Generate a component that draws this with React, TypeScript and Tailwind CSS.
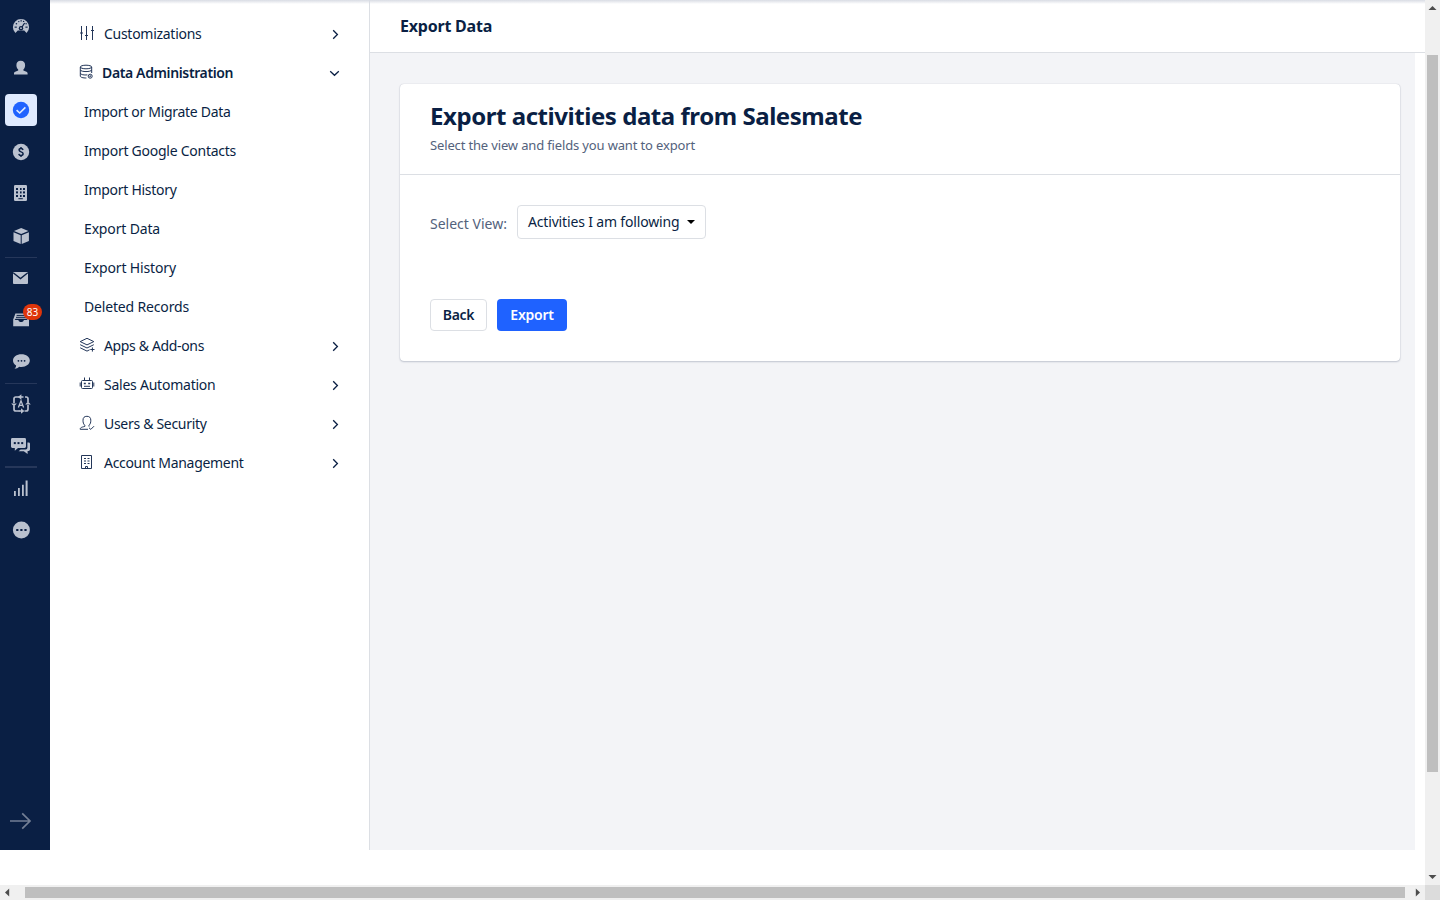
import type { ReactNode } from "react";

const CUT = "#0a1f44";

function RailIcon({ children, className = "" }: { children: ReactNode; className?: string }) {
  return (
    <svg viewBox="0 0 20 20" className={"size-5 " + className} fill="currentColor" stroke="none">
      {children}
    </svg>
  );
}

const Gauge = () => (
  <RailIcon>
    <path d="M4.4 17 A8.1 8.1 0 1 1 15.6 17 L13.2 14.4 H6.8 Z" />
    <g fill={CUT}>
      <rect x="3.6" y="10.6" width="2.2" height="1.1" /><rect x="14.4" y="10.6" width="2.2" height="1.1" />
      <circle cx="5.4" cy="7.7" r="0.8" /><circle cx="7.8" cy="5.6" r="0.7" />
      <rect x="9.6" y="3.8" width="1" height="1.8" /><circle cx="12.6" cy="5.4" r="0.7" /><circle cx="15.1" cy="7.8" r="0.7" />
    </g>
    <path d="M13.6 7 L10.4 12" stroke={CUT} strokeWidth="1.2" />
    <circle cx="10" cy="12.2" r="2.2" fill={CUT} />
    <circle cx="10" cy="12.2" r="0.9" />
    <path d="M6.6 17.2 L7.8 15.2 H12.2 L13.4 17.2 Z" fill={CUT} />
  </RailIcon>
);

const Person = () => (
  <RailIcon>
    <path d="M9.7 2.8 C12.6 2.8 14.1 4.6 14.1 7.2 C14.1 9 13.4 10.5 12.4 11.5 V12.6 L15.4 13.7 C16.2 14 16.6 14.5 16.6 15.4 V16.4 H3 V15.4 C3 14.5 3.4 14 4.2 13.7 L7.2 12.6 V11.5 C6.1 10.5 5.4 9 5.4 7.2 C5.4 4.6 6.9 2.8 9.7 2.8 Z" />
  </RailIcon>
);

const Check = () => (
  <RailIcon className="text-[#1f62ff]">
    <circle cx="10" cy="10" r="8.2" />
    <path d="M5.6 10.2 L8.7 13 L14.4 7.4" fill="none" stroke="#dfeaff" strokeWidth="1.6" />
  </RailIcon>
);

const Dollar = () => (
  <RailIcon>
    <circle cx="10" cy="10" r="8.2" />
    <path d="M12 8 C11.8 6.9 11.1 6.5 10 6.5 C8.8 6.5 8.1 7.1 8.1 8.1 C8.1 10.4 12.1 9.4 12.1 11.8 C12.1 12.9 11.2 13.5 10 13.5 C8.7 13.5 8 12.9 7.8 11.8 M10 4.9 V6.4 M10 13.6 V15.1" fill="none" stroke={CUT} strokeWidth="1.5" />
  </RailIcon>
);

const Building = () => (
  <RailIcon className="-mt-[2px]">
    <rect x="3" y="2" width="13" height="16" rx="1.2" />
    <g fill={CUT}>
      <rect x="5" y="5" width="2" height="2" /><rect x="9" y="5" width="1.6" height="2" /><rect x="12" y="5" width="2" height="2" />
      <rect x="5" y="8.4" width="2" height="2" /><rect x="9" y="8.4" width="1.6" height="2" /><rect x="12" y="8.4" width="2" height="2" />
      <rect x="5" y="12" width="2" height="2" /><rect x="9" y="12" width="1.6" height="2" /><rect x="12" y="12" width="2" height="2" />
      <rect x="7.4" y="15.2" width="4.4" height="1" />
    </g>
  </RailIcon>
);

const Box = () => (
  <RailIcon>
    <path d="M10.2 2.1 L17.4 4.9 L10.2 7.9 L3 4.9 Z M2.5 6.2 L9.7 9.2 V17.9 L2.5 14.9 Z M17.9 6.2 L10.7 9.2 V17.9 L17.9 14.9 Z" />
  </RailIcon>
);

const Mail = () => (
  <RailIcon>
    <rect x="2" y="4" width="15" height="12" rx="0.9" />
    <path d="M2.2 4.8 L9.5 10.6 L16.8 4.8" fill="none" stroke={CUT} strokeWidth="1.3" />
  </RailIcon>
);

const Inbox = () => (
  <RailIcon className="-mt-[2px]">
    <path d="M4.4 4.6 H15.7 L18 10.6 V17.3 H2.2 V10.6 Z" />
    <path d="M5.6 6.4 H14.6 M5 8.3 H15.2" stroke={CUT} strokeWidth="1" />
    <path d="M3.6 10.9 H7.4 C7.6 13.6 12.6 13.6 12.8 10.9 H16.6 L15.6 9.7 H4.6 Z" fill={CUT} />
  </RailIcon>
);

const Chat = () => (
  <RailIcon className="-mt-[2px]">
    <path d="M10.4 3.2 C15.2 3.2 18.8 5.9 18.8 9.6 C18.8 13.3 15.2 16 10.4 16 C9.6 16 9 15.9 8.3 15.8 C7 17 5.4 17.7 3.5 17.8 C4.6 16.9 5.1 15.8 5.1 14.5 C3.1 13.4 2 11.7 2 9.6 C2 5.9 5.6 3.2 10.4 3.2 Z" />
    <g fill={CUT}><circle cx="7.4" cy="9.8" r="0.9" /><circle cx="10.5" cy="9.8" r="0.9" /><circle cx="13.6" cy="9.8" r="0.9" /></g>
  </RailIcon>
);

const Automation = () => (
  <RailIcon>
    <path
      d="M14 3 H15.2 Q17 3 17 4.8 V8 M17 11 V15 Q17 17 15.2 17 H13.5 M8.5 17 H5 Q3 17 3 15.2 V12 M3 9 V4.8 Q3 3 4.8 3 H8"
      fill="none" stroke="currentColor" strokeWidth="1.7"
    />
    <path d="M6.8 3 L10.4 0.2 V2.2 H12.5 V3.8 H10.4 V5.8 Z M0.2 9.4 H5.8 L3 12.6 Z M13.4 17 L10 19.8 V17.8 H7.8 V16.2 H10 V14.2 Z M14.2 10.6 H19.8 L17 7.4 Z" />
    <path d="M7.4 13.4 L10 6.8 L12.6 13.4 M8.4 11.4 H11.6" fill="none" stroke="currentColor" strokeWidth="1.3" />
  </RailIcon>
);

const Conversations = () => (
  <RailIcon>
    <path d="M1.4 2 H13.6 Q15 2 15 3.4 V10.6 Q15 12 13.6 12 H7 L3.8 14.8 V12 H1.4 Q0 12 0 10.6 V3.4 Q0 2 1.4 2 Z" />
    <path d="M16.4 6.4 H17.6 Q19 6.4 19 7.8 V13.6 Q19 15 17.6 15 H16.6 V18 L12.8 15.2 H7.6 L9.6 13.4 H14.8 Q16.4 13.4 16.4 11.8 Z" />
    <g fill={CUT}><rect x="2.8" y="6.1" width="2" height="2" /><rect x="6.5" y="6.1" width="2" height="2" /><rect x="10.2" y="6.1" width="2" height="2" /></g>
  </RailIcon>
);

const Bars = () => (
  <RailIcon>
    <path d="M3 13 H4.8 V18 H3 Z M7 10 H8.8 V18 H7 Z M11 6.8 H12.8 V18 H11 Z M14.6 2.4 H16.6 V18 H14.6 Z" />
  </RailIcon>
);

const More = () => (
  <RailIcon>
    <circle cx="10.4" cy="10" r="8.5" />
    <g fill={CUT}><rect x="5.2" y="9" width="2.2" height="2" /><rect x="9.3" y="9" width="2.2" height="2" /><rect x="13.4" y="9" width="2.2" height="2" /></g>
  </RailIcon>
);

const railGroups: { line: string; items: { id: string; icon: ReactNode; active?: boolean; badge?: string }[] }[] = [
  {
    line: "",
    items: [
      { id: "dashboard", icon: <Gauge /> },
      { id: "contacts", icon: <Person /> },
      { id: "activities", icon: <Check />, active: true },
      { id: "deals", icon: <Dollar /> },
      { id: "companies", icon: <Building /> },
      { id: "products", icon: <Box /> },
    ],
  },
  {
    line: "shadow-[inset_0_1px_0_#26375a]",
    items: [
      { id: "email", icon: <Mail /> },
      { id: "inbox", icon: <Inbox />, badge: "83" },
      { id: "chat", icon: <Chat /> },
    ],
  },
  {
    line: "shadow-[inset_0_1px_0_#26375a]",
    items: [
      { id: "automation", icon: <Automation /> },
      { id: "conversations", icon: <Conversations /> },
    ],
  },
  {
    line: "shadow-[inset_0_1px_0_#26375a,0_-1px_0_#26375a]",
    items: [
      { id: "reports", icon: <Bars /> },
      { id: "more", icon: <More /> },
    ],
  },
];

function Rail() {
  return (
    <nav className="flex h-[850px] w-[50px] shrink-0 flex-col bg-[#0a1f44] pt-[5px] pl-[5px] text-[#bac1cf]">
      {railGroups.map((group, g) => (
        <div key={g} className={"w-8 " + group.line}>
          {group.items.map((item) => (
            <div key={item.id} className="flex h-[42px] items-center">
              <div className={"relative flex size-8 items-center justify-center rounded-[4px] " + (item.active ? "bg-[#dfeaff]" : "")}>
                {item.icon}
                {item.badge && (
                  <span className="absolute top-0 left-[18px] flex h-4 w-[19px] items-center justify-center rounded-full bg-[#de350b] text-[10px] leading-4 text-white">
                    {item.badge}
                  </span>
                )}
              </div>
            </div>
          ))}
        </div>
      ))}
      <svg viewBox="0 0 22 18" className="mt-auto mb-5 ml-[5px] h-[18px] w-[22px]" fill="none" stroke="#737f95" strokeWidth="1.7">
        <path d="M0 9 H20 M12.2 1.4 L20 9 L12.2 16.6" />
      </svg>
    </nav>
  );
}

function MenuIcon({ children }: { children: ReactNode }) {
  return (
    <svg viewBox="0 0 16 16" className="-mt-0.5 size-4 shrink-0" fill="none" stroke="#233659" strokeWidth="1">
      {children}
    </svg>
  );
}

const Sliders = () => (
  <MenuIcon>
    <path d="M2.5 1 V15 M7.5 1 V15 M13.5 1 V15 M1 8 H4 M6 10.5 H9 M12 5.5 H15" />
  </MenuIcon>
);
const Database = () => (
  <MenuIcon>
    <ellipse cx="7" cy="3" rx="5.7" ry="1.8" />
    <path d="M1.3 3 V12 C1.3 13.4 4 14 7.4 14 M12.7 3 V9 M1.3 6 C2 8.1 12 8.1 12.7 6 M1.3 9.2 C1.9 10.8 5 11.2 8.4 10.9" />
    <circle cx="11.2" cy="12.2" r="2" />
    <circle cx="11.2" cy="12.2" r="0.5" />
  </MenuIcon>
);
const Layers = () => (
  <MenuIcon>
    <path d="M8 1.3 L14.8 4.6 L8 7.9 L1.2 4.6 Z M1.2 7.7 L8 11 L14.8 7.7 M1.2 10.8 L8 14.1 L10.6 12.8 M13.4 10.4 V14.6 M11.3 12.5 H15.5" />
  </MenuIcon>
);
const Robot = () => (
  <MenuIcon>
    <rect x="2.5" y="4.5" width="11" height="8" rx="1" />
    <path d="M5.5 4.5 V1.5 M10.5 4.5 V1.5 M1.2 6.5 V10.5 M14.8 6.5 V10.5 M5 10.3 H11" />
    <path d="M4.8 7.5 H6.8 M9.2 7.5 H11.2" strokeWidth="1.3" />
  </MenuIcon>
);
const User = () => (
  <MenuIcon>
    <path d="M9 14.3 H1.2 C1.2 12.8 2 12.3 5.8 11.4 V10.2 C4.4 9 4 7.6 4 5.2 C4 2.6 5.4 1.3 7.9 1.3 C10.4 1.3 11.8 2.6 11.8 5.2 C11.8 7.6 11.4 9 10 10.2 V11.6 M10 12.8 L11.8 14.4 L15 11.2" />
  </MenuIcon>
);
const Office = () => (
  <MenuIcon>
    <path d="M2.5 1.5 H12.5 V14.5 H2.5 Z M6.5 14.5 V12.5 H8.5 V14.5" />
    <path d="M5 4.5 H7 M8.5 4.5 H10.5 M5 7 H7 M8.5 7 H10.5 M5 9.5 H7 M8.5 9.5 H10.5" />
  </MenuIcon>
);

const Chevron = ({ open }: { open?: boolean }) => (
  <svg viewBox="0 0 12 12" className="ml-auto size-3 shrink-0" fill="none" stroke="#0a1f44" strokeWidth="1.3">
    <path d={open ? "M1.2 4.3 L5.5 8.3 L9.8 4.3" : "M4.2 2.2 L8.4 6.5 L4.2 10.8"} />
  </svg>
);

function Section({ icon, label, text, open }: { icon: ReactNode; label: string; text: string; open?: boolean }) {
  return (
    <div className={"flex h-[39px] items-center pr-[28px] pl-[29px] " + (open ? "gap-[7px]" : "gap-[9px]")}>
      {icon}
      <span className={text}>{label}</span>
      <Chevron open={open} />
    </div>
  );
}

const subItems = [
  { label: "Import or Migrate Data", text: "tracking-[-0.302px]" },
  { label: "Import Google Contacts", text: "tracking-[-0.256px]" },
  { label: "Import History", text: "tracking-[-0.288px]" },
  { label: "Export Data", text: "tracking-[-0.158px]" },
  { label: "Export History", text: "tracking-[-0.135px]" },
  { label: "Deleted Records", text: "tracking-[-0.163px]" },
];

function Menu() {
  return (
    <aside className="h-[850px] w-[320px] shrink-0 border-r border-[#dcdfe4] bg-white pt-[14px] text-[14px] leading-5 whitespace-nowrap">
      <Section icon={<Sliders />} label="Customizations" text="tracking-[-0.277px]" />
      <Section icon={<Database />} label="Data Administration" text="font-semibold tracking-[-0.37px]" open />
      {subItems.map((s) => (
        <div key={s.label} className="flex h-[39px] items-center pl-[34px]">
          <span className={s.text}>{s.label}</span>
        </div>
      ))}
      <Section icon={<Layers />} label="Apps & Add-ons" text="tracking-[-0.35px]" />
      <Section icon={<Robot />} label="Sales Automation" text="tracking-[-0.234px]" />
      <Section icon={<User />} label="Users & Security" text="tracking-[-0.3px]" />
      <Section icon={<Office />} label="Account Management" text="tracking-[-0.313px]" />
    </aside>
  );
}

function ExportCard() {
  return (
    <section className="h-[277px] rounded-[4px] bg-white shadow-[0_0_1px_rgba(10,31,68,0.25),0_1px_2px_rgba(10,31,68,0.2)]">
      <div className="h-[91px] border-b border-[#dcdfe4] pt-4 pl-[30px]">
        <h1 className="text-[24px] leading-8 font-bold tracking-[-0.451px]">Export activities data from Salesmate</h1>
        <p className="mt-[3px] text-[13px] leading-5 tracking-[-0.149px] text-[#53627c]">Select the view and fields you want to export</p>
      </div>
      <div className="px-[30px] pt-[30px] text-[14px] leading-5">
        <div className="flex h-[34px] items-center">
          <span className="mt-1 w-[87px] text-[#53627c]">Select View:</span>
          <button className="flex h-[34px] w-[189px] items-center justify-between rounded-[4px] border border-[#dcdfe4] px-[10px] tracking-[-0.165px] whitespace-nowrap">
            Activities I am following
            <svg viewBox="0 0 8 4" className="h-1 w-2" fill="#000"><path d="M0 0 H8 L4 4 Z" /></svg>
          </button>
        </div>
        <div className="mt-[60px] flex gap-[10px] font-semibold">
          <button className="h-8 w-[57px] rounded-[4px] border border-[#dcdfe4] tracking-[-0.35px]">Back</button>
          <button className="h-8 w-[70px] rounded-[4px] bg-[#1f62ff] tracking-[-0.25px] text-white">Export</button>
        </div>
      </div>
    </section>
  );
}

const Arrow = ({ d }: { d: string }) => (
  <svg viewBox="0 0 15 15" className="size-[15px] shrink-0" fill="#4d4d4d"><path d={d} /></svg>
);

export default function App() {
  return (
    <div className="flex h-[900px] w-[1440px] flex-col overflow-hidden bg-white font-['Noto_Sans',sans-serif] text-[#0a1f44]">
      <div className="flex h-[885px]">
        <div className="relative flex w-[1425px]">
          <Rail />
          <Menu />
          <main className="flex h-[850px] flex-1 flex-col">
            <header className="flex h-[53px] items-center border-b border-[#dcdfe4] pl-[30px] text-[16px] font-bold tracking-[-0.219px]">Export Data</header>
            <div className="mr-[10px] flex-1 bg-[#f3f4f7] pt-[31px] pr-[15px] pl-[30px]">
              <ExportCard />
            </div>
          </main>
          <div className="absolute top-0 right-0 left-[50px] h-1 bg-linear-to-b from-[#d9dce4] to-transparent" />
        </div>
        <div className="flex w-[15px] flex-col items-center bg-[#f0f0f0]">
          <Arrow d="M3.5 10 H11.5 L7.5 6 Z" />
          <div className="mt-10 h-[717px] w-[11px] bg-[#bfbfbf]" />
          <div className="mt-auto"><Arrow d="M3.5 5 H11.5 L7.5 9 Z" /></div>
        </div>
      </div>
      <div className="flex h-[15px]">
        <div className="flex w-[1425px] items-center bg-[#f0f0f0]">
          <Arrow d="M9.2 3.5 V11.5 L5 7.5 Z" />
          <div className="ml-[10px] h-[11px] w-[1380px] bg-[#bfbfbf]" />
          <div className="ml-auto flex"><Arrow d="M5.8 3.5 V11.5 L10 7.5 Z" /></div>
        </div>
        <div className="w-[15px] bg-[#dcdcdc]" />
      </div>
    </div>
  );
}
